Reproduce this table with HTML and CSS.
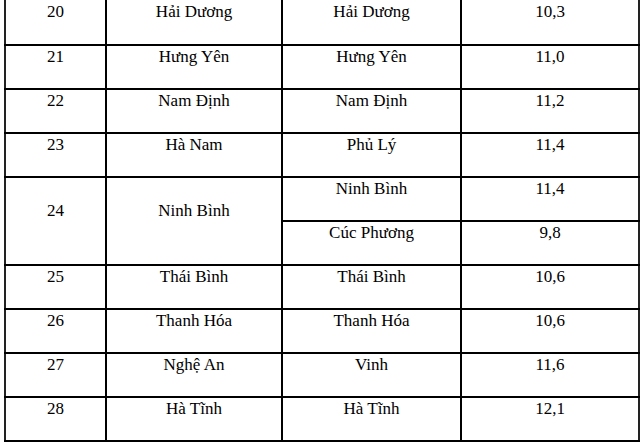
FILE: index.html
```html
<!DOCTYPE html>
<html lang="vi">
<head>
<meta charset="utf-8">
<link rel="stylesheet" href="styles.css">
</head>
<body>
<table class="data">
  <colgroup>
    <col class="c1"><col class="c2"><col class="c3"><col class="c4">
  </colgroup>
  <tbody>
    <tr class="first"><td>20</td><td>Hải Dương</td><td>Hải Dương</td><td>10,3</td></tr>
    <tr><td>21</td><td>Hưng Yên</td><td>Hưng Yên</td><td>11,0</td></tr>
    <tr><td>22</td><td>Nam Định</td><td>Nam Định</td><td>11,2</td></tr>
    <tr><td>23</td><td>Hà Nam</td><td>Phủ Lý</td><td>11,4</td></tr>
    <tr><td rowspan="2">24</td><td rowspan="2">Ninh Bình</td><td>Ninh Bình</td><td>11,4</td></tr>
    <tr><td>Cúc Phương</td><td>9,8</td></tr>
    <tr><td>25</td><td>Thái Bình</td><td>Thái Bình</td><td>10,6</td></tr>
    <tr><td>26</td><td>Thanh Hóa</td><td>Thanh Hóa</td><td>10,6</td></tr>
    <tr><td>27</td><td>Nghệ An</td><td>Vinh</td><td>11,6</td></tr>
    <tr><td>28</td><td>Hà Tĩnh</td><td>Hà Tĩnh</td><td>12,1</td></tr>
  </tbody>
</table>
</body>
</html>
```
FILE: styles.css
```css
html, body {
  margin: 0;
  padding: 0;
  background: #fff;
}
body {
  font-family: "Liberation Serif", serif;
  font-size: 17px;
  color: #000;
}
.data {
  margin-left: 4px;
  width: 634px;
  table-layout: fixed;
  border-collapse: collapse;
  border-left: 2px solid #222;
  border-right: 2px solid #222;
  border-bottom: 2px solid #222;
}
.c1 { width: 101px; }
.c2 { width: 176px; }
.c3 { width: 179px; }
.c4 { width: 178px; }
.data tr { height: 44px; }
.data tr.first { height: 45px; }
.data td {
  font-family: "Liberation Serif", serif;
  font-size: 17px;
  border: 2px solid #000;
  padding: 0 4px 21px;
  text-align: center;
  vertical-align: middle;
  white-space: nowrap;
}
.data tr.first td {
  border-top: none;
}
.data td:first-child { border-left-color: #222; }
.data td:last-child { border-right-color: #222; }
```
